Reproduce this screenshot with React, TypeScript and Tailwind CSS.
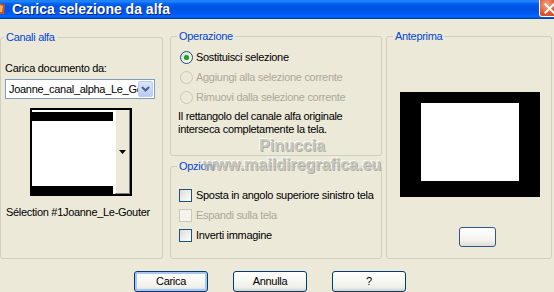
import React from 'react'

const font = "font-['Liberation_Sans',Arial,sans-serif]"

const Radio = ({ checked, disabled, label }: { checked?: boolean; disabled?: boolean; label: string }) => (
    <div className="flex h-[20px] items-center">
        <div
            className={`flex h-[13px] w-[13px] items-center justify-center rounded-full border ${
                disabled
                    ? 'border-[#CAC8BB] bg-[#ECE9D8]'
                    : 'border-[#1C5180] bg-[linear-gradient(135deg,#DCDCD7,#ffffff)]'
            }`}
        >
            {checked && <div className="h-[5px] w-[5px] rounded-full bg-[#21A121] shadow-[0_0_1px_#5CD65C]" />}
        </div>
        <span className={`ml-[3px] ${disabled ? 'text-[#ACA899]' : 'text-black'}`}>{label}</span>
    </div>
)

const Check = ({ disabled, label }: { disabled?: boolean; label: string }) => (
    <div className="flex h-[20px] items-center">
        <div
            className={`h-[13px] w-[13px] border ${
                disabled
                    ? 'border-[#CAC8BB] bg-[#F4F3EE]'
                    : 'border-[#1C5180] bg-[linear-gradient(135deg,#DCDCD7,#ffffff)]'
            }`}
        />
        <span className={`ml-[4px] ${disabled ? 'text-[#ACA899]' : 'text-black'}`}>{label}</span>
    </div>
)

const XpButton = ({ label, primary }: { label: string; primary?: boolean }) => (
    <button
        className={`flex h-[21px] w-[74px] items-center justify-center rounded-[3px] border border-[#003C74] bg-[linear-gradient(#FFFFFF,#F0F0EA_80%,#D6D0C5)] text-black ${
            primary ? 'shadow-[inset_0_0_0_2px_#A9C6F5]' : ''
        }`}
    >
        {label}
    </button>
)

const legend = 'px-[2px] text-[#0046D5] leading-[13px]'

export default function App() {
    return (
        <div className={`relative flex h-[292px] w-[554px] flex-col overflow-hidden bg-[#ECE9D8] text-[11px] leading-[13px] tracking-[-0.3px] ${font}`}>
            {/* title bar */}
            <div className="flex h-[19px] shrink-0 items-start bg-[linear-gradient(#0058EE_0%,#3593FF_4%,#127DFF_10%,#0262EE_20%,#0054E3_35%,#0055EB_60%,#005BF5_75%,#026AFE_85%,#0052D6_95%,#003092_100%)]">
                <svg width="6" height="14" viewBox="0 0 6 14" className="mt-[2px]">
                    <path d="M0 1 L5 3 L4 12 L0 12 Z" fill="#C8542A" />
                    <path d="M0 3 L3 4 L2 10 L0 10 Z" fill="#F2B35A" />
                </svg>
                <span className="ml-[6px] mt-[1px] text-[14px] font-bold leading-[16px] tracking-normal text-white [text-shadow:1px_1px_0_#0A1F7D]">
                    Carica selezione da alfa
                </span>
                <div className="ml-auto -mr-[6px] flex h-[17px] w-[21px] items-center justify-center rounded-b-[3px] border border-t-0 border-white bg-[radial-gradient(circle_at_35%_30%,#F4A587,#E0552F_55%,#C9401C)]">
                    <svg width="11" height="11" viewBox="0 0 11 11">
                        <path d="M1.5 1.5 L9.5 9.5 M9.5 1.5 L1.5 9.5" stroke="white" strokeWidth="2" strokeLinecap="square" />
                    </svg>
                </div>
            </div>

            {/* body */}
            <div className="flex pt-[11px]">
                {/* Canali alfa */}
                <fieldset className="mt-[1px] h-[228px] w-[163px] rounded-[3px] border border-[#D0D0BF] pl-[3px]">
                    <legend className={legend}>Canali alfa</legend>
                    <div className="flex flex-col pl-[1px]">
                        <div className="mt-[18px]">Carica documento da:</div>
                        <div className="mt-[4px] flex h-[20px] w-[150px] items-center border border-[#7F9DB9] bg-white">
                            <span className="ml-[3px] flex-1 overflow-hidden whitespace-nowrap">Joanne_canal_alpha_Le_Gouter</span>
                            <div className="mr-[1px] flex h-[16px] w-[15px] shrink-0 items-center justify-center rounded-[2px] border border-[#B9CDF6] bg-[linear-gradient(#D9E5FD,#B8CCF8)]">
                                <svg width="9" height="6" viewBox="0 0 9 6">
                                    <path d="M1 1 L4.5 4.5 L8 1" stroke="#4D6185" strokeWidth="2" fill="none" />
                                </svg>
                            </div>
                        </div>
                        <div className="ml-[25px] mt-[9px] flex h-[88px] w-[102px] border-2 border-black bg-white">
                            <div className="flex flex-1 flex-col justify-between pt-[2px]">
                                <div className="h-[9px] w-[81px] bg-black" />
                                <div className="h-[8px] w-[81px] bg-black" />
                            </div>
                            <div className="flex w-[16px] items-center justify-center border-b border-r border-[#808080] border-l-2 border-l-white bg-[#ECE9D8]">
                                <svg width="7" height="4" viewBox="0 0 7 4">
                                    <path d="M0 0 H7 L3.5 4 Z" fill="black" />
                                </svg>
                            </div>
                        </div>
                        <div className="ml-[1px] mt-[10px]">Sélection #1Joanne_Le-Gouter</div>
                    </div>
                </fieldset>

                {/* middle column */}
                <div className="ml-[7px] flex w-[212px] flex-col gap-[4px]">
                    <fieldset className="h-[126px] rounded-[3px] border border-[#D0D0BF] pl-[6px]">
                        <legend className={legend}>Operazione</legend>
                        <div className="mt-[4px] flex flex-col pl-[3px]">
                            <Radio checked label="Sostituisci selezione" />
                            <Radio disabled label="Aggiungi alla selezione corrente" />
                            <Radio disabled label="Rimuovi dalla selezione corrente" />
                        </div>
                        <p className="ml-[1px] mt-[3px]">
                            Il rettangolo del canale alfa originale
                            <br />
                            interseca completamente la tela.
                        </p>
                    </fieldset>
                    <fieldset className="h-[99px] rounded-[3px] border border-[#D0D0BF] pl-[6px]">
                        <legend className={legend}>Opzioni</legend>
                        <div className="mt-[12px] flex flex-col pl-[2px]">
                            <Check label="Sposta in angolo superiore sinistro tela" />
                            <Check disabled label="Espandi sulla tela" />
                            <Check label="Inverti immagine" />
                        </div>
                    </fieldset>
                </div>

                {/* Anteprima */}
                <fieldset className="ml-[4px] h-[229px] w-[166px] rounded-[3px] border border-[#D0D0BF] pl-[6px]">
                    <legend className={legend}>Anteprima</legend>
                    <div className="ml-[7px] mt-[49px] h-[105px] w-[140px] bg-black pl-[21px] pt-[11px]">
                        <div className="h-[78px] w-[98px] bg-white" />
                    </div>
                    <div className="ml-[66px] mt-[30px] h-[20px] w-[37px] rounded-[3px] border border-[#33568A] bg-[linear-gradient(#FFFFFF,#F2F2EE_70%,#DEDCD3)]" />
                </fieldset>
            </div>

            {/* buttons */}
            <div className="mt-[12px] flex gap-[25px] pl-[134px]">
                <XpButton primary label="Carica" />
                <XpButton label="Annulla" />
                <XpButton label="?" />
            </div>

            {/* watermark */}
            <div className="pointer-events-none absolute left-[197px] top-[137px] flex w-[190px] flex-col items-center font-bold tracking-normal text-[#BDBDB5] opacity-75 [text-shadow:1px_1px_0_#9A9A92,-1px_-1px_0_#FFFFFF]">
                <span className="text-[16px] leading-[18px]">Pinuccia</span>
                <span className="text-[16px] leading-[20px]">www.maildiregrafica.eu</span>
            </div>
        </div>
    )
}
